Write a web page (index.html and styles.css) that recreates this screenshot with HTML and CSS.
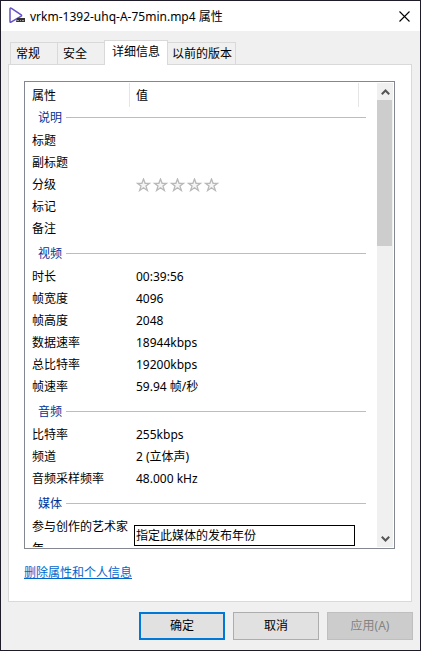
FILE: index.html
```html
<!DOCTYPE html>
<html lang="zh-CN">
<head>
<meta charset="utf-8">
<title>vrkm-1392-uhq-A-75min.mp4 属性</title>
<link rel="stylesheet" href="styles.css">
</head>
<body>
<main class="window">
  <header class="titlebar">
    <svg class="file-icon" width="18" height="18" viewBox="0 0 18 18" aria-hidden="true">
      <path d="M2 2v12.500q0 1.200 1 .6l10.200-6q.8-.6 0-1.200L3.500 1.400Q2 .6 2 2z" fill="#fff" stroke="#6550c8" stroke-width="1.500"/>
      <path d="M9 11h8v4H8z" fill="#333"/>
      <path d="M9 13.500h2m1 0h1m1 0h2" stroke="#999"/>
    </svg>
    <h1 class="title">vrkm-1392-uhq-A-75min.mp4 属性</h1>
    <button class="close" type="button" aria-label="关闭">
      <svg width="11" height="11" viewBox="0 0 11 11" aria-hidden="true"><path d="M.5.5l10 10M10.500.5l-10 10" stroke="#000" stroke-width="1.100"/></svg>
    </button>
  </header>

  <div class="content">
    <nav class="tabs" role="tablist">
      <button class="tab" type="button" role="tab">常规</button>
      <button class="tab" type="button" role="tab">安全</button>
      <button class="tab tab-active" type="button" role="tab" aria-selected="true">详细信息</button>
      <button class="tab tab-wide" type="button" role="tab">以前的版本</button>
    </nav>

    <section class="panel">
      <div class="list">
        <div class="viewport">
          <table class="details">
            <thead>
              <tr><th class="name">属性</th><th class="value">值</th></tr>
            </thead>
            <tbody>
              <tr><th class="group" colspan="2"><div class="group-label">说明</div></th></tr>
              <tr><td>标题</td><td></td></tr>
              <tr><td>副标题</td><td></td></tr>
              <tr><td>分级</td><td>
                <svg class="stars" width="84" height="14" viewBox="0 0 84 14" role="img" aria-label="未分级">
                  <defs><path id="star" d="M7.500 1l1.600 4.300h4.400l-3.500 2.800 1.400 4.400-3.900-2.700-3.900 2.700 1.400-4.400L1.500 5.300h4.400z" fill="#f5f5f5" stroke="#b8b8b8" stroke-width="1.300"/></defs>
                  <use href="#star"/><use href="#star" x="17"/><use href="#star" x="34"/><use href="#star" x="51"/><use href="#star" x="68"/>
                </svg>
              </td></tr>
              <tr><td>标记</td><td></td></tr>
              <tr><td>备注</td><td></td></tr>
            </tbody>
            <tbody>
              <tr><th class="group group-next" colspan="2"><div class="group-label">视频</div></th></tr>
              <tr><td>时长</td><td>00:39:56</td></tr>
              <tr><td>帧宽度</td><td>4096</td></tr>
              <tr><td>帧高度</td><td>2048</td></tr>
              <tr><td>数据速率</td><td>18944kbps</td></tr>
              <tr><td>总比特率</td><td>19200kbps</td></tr>
              <tr><td>帧速率</td><td>59.94 帧/秒</td></tr>
            </tbody>
            <tbody>
              <tr><th class="group group-next" colspan="2"><div class="group-label">音频</div></th></tr>
              <tr><td>比特率</td><td>255kbps</td></tr>
              <tr><td>频道</td><td>2 (立体声)</td></tr>
              <tr><td>音频采样频率</td><td>48.000 kHz</td></tr>
            </tbody>
            <tbody>
              <tr><th class="group group-next" colspan="2"><div class="group-label">媒体</div></th></tr>
              <tr><td>参与创作的艺术家</td><td></td></tr>
              <tr><td>年</td><td class="tip-cell"><div class="tip" role="tooltip">指定此媒体的发布年份</div></td></tr>
            </tbody>
          </table>
        </div>
        <div class="scrollbar">
          <button class="arrow" type="button" aria-label="向上滚动">
            <svg width="9" height="6" viewBox="0 0 9 6" aria-hidden="true"><path d="M.8 5.200l3.700-3.700 3.700 3.700" fill="none" stroke="#555" stroke-width="2"/></svg>
          </button>
          <div class="track"><div class="thumb"></div></div>
          <button class="arrow" type="button" aria-label="向下滚动">
            <svg width="9" height="6" viewBox="0 0 9 6" aria-hidden="true"><path d="M.8.8l3.700 3.700L8.200.8" fill="none" stroke="#555" stroke-width="2"/></svg>
          </button>
        </div>
      </div>
      <a class="remove" href="#">删除属性和个人信息</a>
    </section>
  </div>

  <footer class="actions">
    <button class="button button-default" type="button">确定</button>
    <button class="button" type="button">取消</button>
    <button class="button" type="button" disabled>应用(A)</button>
  </footer>
</main>
</body>
</html>
```
FILE: styles.css
```css
* {
  box-sizing: border-box;
}

body {
  margin: 0;
  font-family: "Noto Sans", "Noto Sans CJK SC", sans-serif;
  font-size: 12px;
  line-height: 20px;
  color: #000;
}

button {
  margin: 0;
  padding: 0;
  border: 0;
  font: inherit;
  color: inherit;
}

.window {
  display: flex;
  flex-direction: column;
  height: 100vh;
  border: 1px solid #1e1c28;
  background: #f0f0f0;
}

.titlebar {
  display: flex;
  align-items: center;
  height: 30px;
  padding: 0 10px 0 7px;
  background: #fff;
}

.file-icon {
  flex: none;
}

.title {
  flex: 1;
  margin: 0 0 0 4px;
  padding-top: 2px;
  font-size: 12px;
  font-weight: 400;
  white-space: nowrap;
}

.close {
  display: flex;
  background: none;
}

.content {
  flex: 1;
  display: flex;
  flex-direction: column;
  min-height: 0;
  padding: 9px 8px 0 7px;
}

.tabs {
  display: flex;
  align-items: flex-end;
  padding-left: 2px;
}

.tab {
  width: 48px;
  height: 22px;
  margin-right: -1px;
  padding: 1px 0 0 5px;
  border: 1px solid #d9d9d9;
  border-bottom: 0;
  background: #f0f0f0;
  text-align: left;
  white-space: nowrap;
}

.tab-active {
  z-index: 1;
  width: 64px;
  height: 25px;
  margin-bottom: -1px;
  padding: 0 0 2px 7px;
  background: #fff;
}

.tab-wide {
  width: 69px;
  padding-left: 4px;
}

.panel {
  flex: 1;
  display: flex;
  flex-direction: column;
  align-items: flex-start;
  min-height: 0;
  padding: 16px 16px 18px 15px;
  border: 1px solid #d9d9d9;
  background: #fff;
}

.list {
  flex: 1;
  display: flex;
  align-self: stretch;
  min-height: 0;
  padding: 1px;
  border: 1px solid #828790;
}

.viewport {
  flex: 1;
  overflow: hidden;
  padding-right: 11px;
}

.details {
  width: 100%;
  border-collapse: collapse;
  table-layout: fixed;
}

.details th {
  font-weight: 400;
  text-align: left;
}

.details td,
.details th {
  height: 22px;
  padding: 2px 0 0 6px;
  white-space: nowrap;
}

.details thead th {
  height: 24px;
}

.details .name {
  width: 104px;
}

.details thead .name {
  background: linear-gradient(#e5e5e5, #e5e5e5) right / 1px 100% no-repeat;
}

.details thead .value {
  background: linear-gradient(#e5e5e5, #e5e5e5) right 7px top / 1px 100% no-repeat;
}

.details .group {
  padding: 0 0 2px 12px;
  color: #003399;
}

.details .group-next {
  padding-top: 4px;
}

.group-label {
  display: flex;
  align-items: center;
  gap: 4px;
  padding-top: 1px;
  line-height: 19px;
}

.group-label::after {
  content: "";
  flex: 1;
  height: 1px;
  background: #b0bddc;
}

.stars {
  display: block;
}

.details .tip-cell {
  position: relative;
}

.tip {
  position: absolute;
  top: -12px;
  left: 4px;
  width: 221px;
  height: 21px;
  padding-left: 1px;
  border: 1px solid #000;
  background: #fff;
}

.scrollbar {
  display: flex;
  flex-direction: column;
  width: 16px;
  background: #f0f0f0;
}

.arrow {
  display: flex;
  align-items: center;
  justify-content: center;
  height: 17px;
  background: #f0f0f0;
}

.track {
  flex: 1;
}

.thumb {
  width: 15px;
  height: 34%;
  background: #cdcdcd;
}

.remove {
  margin-top: 14px;
  color: #0066cc;
}

.actions {
  display: flex;
  justify-content: flex-end;
  gap: 8px;
  padding: 10px 7px;
}

.button {
  width: 86px;
  height: 28px;
  border: 1px solid #adadad;
  background: #e1e1e1;
  text-align: center;
}

.button-default {
  border: 2px solid #0078d7;
}

.button:disabled {
  border-color: #bfbfbf;
  background: #cccccc;
  color: #838383;
}
```
